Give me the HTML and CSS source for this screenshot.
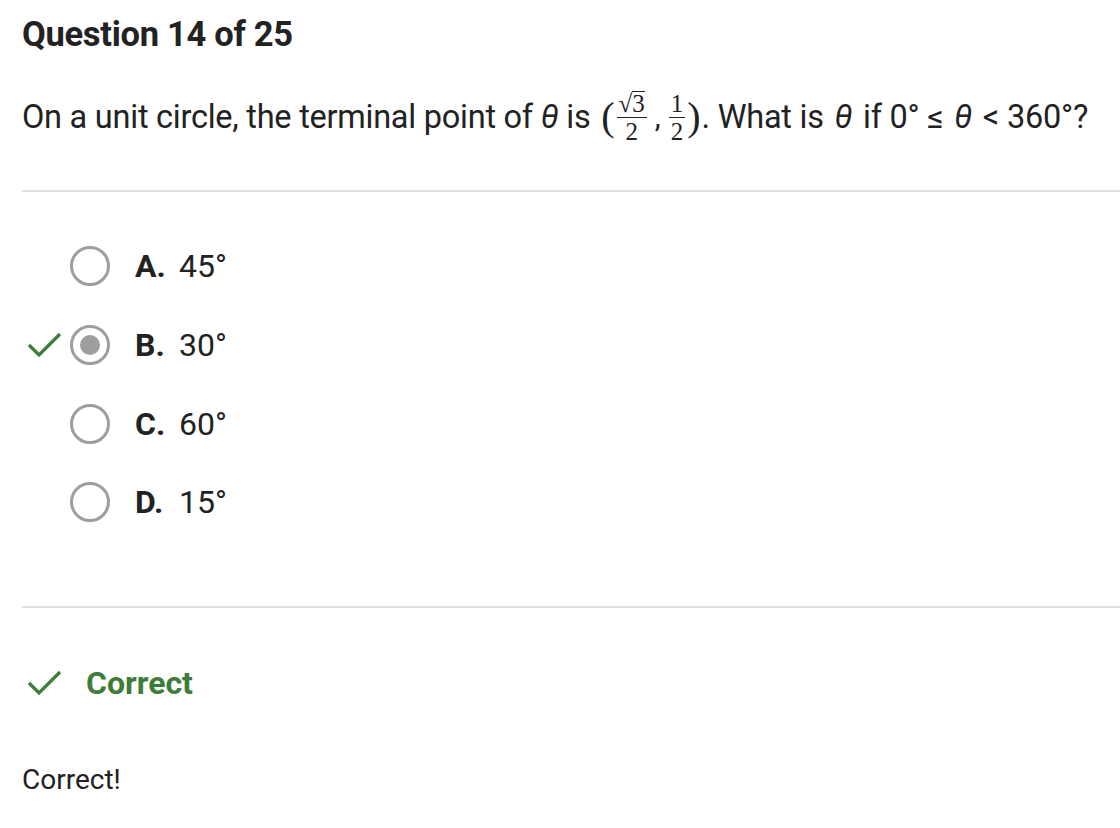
FILE: index.html
```html
<!DOCTYPE html>
<html>
<head>
<meta charset="utf-8">
<link rel="stylesheet" href="styles.css">
</head>
<body>
<div class="page">
  <h1 class="title">Question 14 of 25</h1>
  <p class="prompt">On a unit circle, the terminal point of <i class="th">θ</i> is <span class="math"><span class="paren">(</span><span class="frac"><span class="num"><span class="rad">√</span><span class="over">3</span></span><span class="den">2</span></span><span class="comma">,</span><span class="frac"><span class="num">1</span><span class="den">2</span></span><span class="paren">)</span></span>. What is <i class="th th2">θ</i> if 0° ≤ <i class="th th2">θ</i> &lt; 360°?</p>
  <hr class="rule">
  <ul class="options">
    <li class="opt"><span class="mark"></span><span class="radio"></span><span class="letter">A.</span><span class="val">45°</span></li>
    <li class="opt"><span class="mark"><svg width="36" height="30" viewBox="0 0 36 30"><path d="M2 15 L12 25 L33 4" fill="none" stroke="#3d7d3a" stroke-width="3.2"/></svg></span><span class="radio sel"></span><span class="letter">B.</span><span class="val">30°</span></li>
    <li class="opt"><span class="mark"></span><span class="radio"></span><span class="letter">C.</span><span class="val">60°</span></li>
    <li class="opt"><span class="mark"></span><span class="radio"></span><span class="letter">D.</span><span class="val">15°</span></li>
  </ul>
  <hr class="rule rule2">
  <div class="result"><svg width="36" height="30" viewBox="0 0 36 30"><path d="M2 15 L12 25 L33 4" fill="none" stroke="#3d7d3a" stroke-width="3.2"/></svg><span>Correct</span></div>
  <p class="feedback">Correct!</p>
</div>
</body>
</html>
```
FILE: styles.css
```css
html, body { margin: 0; padding: 0; background: #fff; }
body { font-family: Roboto, "Liberation Sans", sans-serif; color: #222; }
.page { padding: 12px 0 0 22px; }
.title { font-size: 34.5px; font-weight: 700; margin: 0; line-height: 44px; color: #222; letter-spacing: -0.3px; }
.prompt { font-size: 32.5px; margin: 33px 0 0 0; line-height: 56px; height: 56px; color: #222; letter-spacing: -0.25px; white-space: nowrap; }
.th { font-style: italic; }
.th2 { margin: 0 3px; }
.math { font-family: "Liberation Serif", serif; display: inline-flex; align-items: center; vertical-align: middle; height: 56px; position: relative; top: -2px; letter-spacing: 0; margin-left: 2px; }
.paren { font-size: 40px; line-height: 56px; margin: 0 1px; }
.frac { display: inline-flex; flex-direction: column; align-items: center; font-size: 25px; line-height: 25px; margin: 0 1px; }
.num { padding: 0 2px 1px; border-bottom: 1.5px solid #222; display: inline-flex; align-items: flex-end; }
.den { padding-top: 1px; }
.rad { font-size: 25px; }
.over { border-top: 1.5px solid #222; line-height: 24px; }
.comma { font-family: Roboto, sans-serif; font-size: 30px; margin: 0 7px; align-self: center; }
.rule { border: 0; border-top: 2px solid #e0e0e0; margin: 45px 0 0 0; }
.options { list-style: none; margin: 35px 0 0 0; padding: 0; }
.opt { display: flex; align-items: center; height: 78.7px; font-size: 32px; }
.mark { width: 43px; padding-left: 5px; display: flex; align-items: center; }
.radio { width: 34px; height: 34px; border: 3.5px solid #9e9e9e; border-radius: 50%; box-sizing: content-box; position: relative; }
.radio.sel::after { content: ""; position: absolute; left: 7px; top: 7px; width: 20px; height: 20px; border-radius: 50%; background: #9e9e9e; }
.letter { font-weight: 700; margin-left: 25px; width: 44px; }
.rule2 { margin-top: 64px; }
.result { display: flex; align-items: center; height: 40px; margin-top: 55px; font-size: 32px; font-weight: 700; color: #3d7d3a; }
.result svg { margin-left: 5px; margin-right: 23px; }
.feedback { font-size: 28px; line-height: 33px; margin: 60px 0 0 0; color: #222; }
```
